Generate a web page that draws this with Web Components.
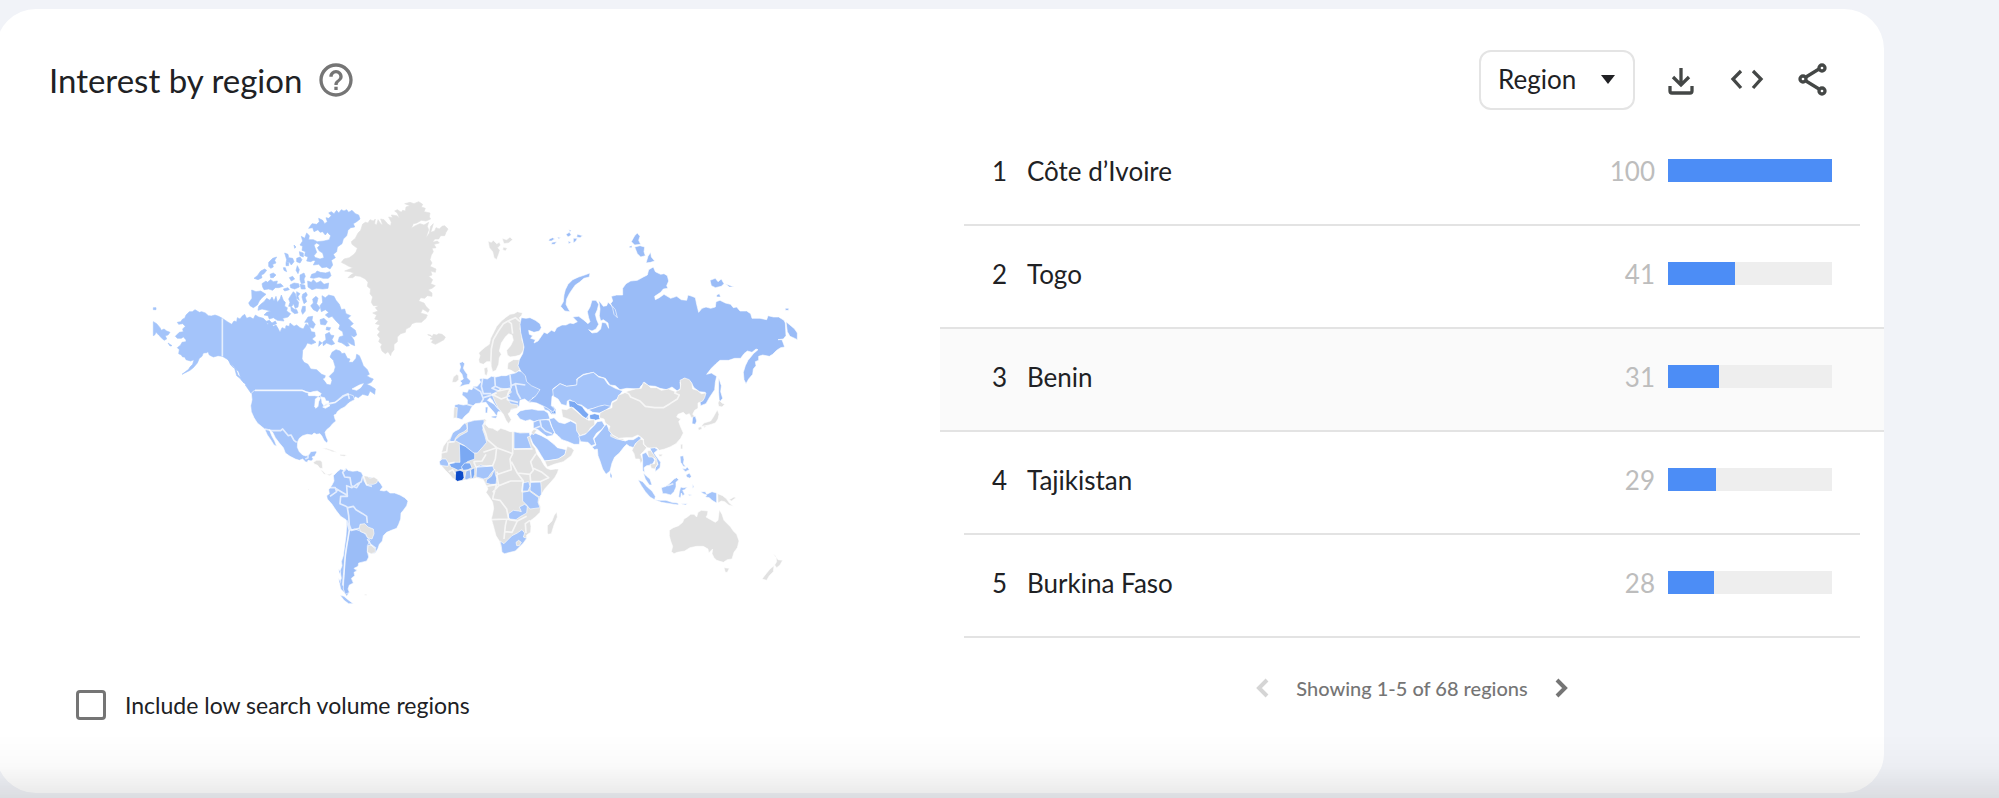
<!DOCTYPE html>
<html lang="en">
<head>
<meta charset="utf-8">
<title>Interest by region</title>
<style>
  html, body { height: 100%; }
  body {
    margin: 0;
    background: #f1f3f8;
    color: #202124;
    font-family: Lato, sans-serif;
    overflow: hidden;
  }
</style>
</head>
<body>
<trends-card>
  <span slot="title">Interest by region</span>
  <help-button slot="title"></help-button>
  <region-select slot="actions"></region-select>
  <icon-button slot="actions" name="download" label="Download CSV"></icon-button>
  <icon-button slot="actions" name="embed" label="Embed"></icon-button>
  <icon-button slot="actions" name="share" label="Share"></icon-button>
  <geo-map slot="chart"></geo-map>
  <check-option slot="chart">Include low search volume regions</check-option>
  <rank-table slot="list"></rank-table>
  <list-pager slot="list">Showing 1-5 of 68 regions</list-pager>
</trends-card>
<page-fade></page-fade>

<script>
class TrendsCard extends HTMLElement {
  constructor() {
    super();
    this.attachShadow({ mode: 'open' });
  }

  connectedCallback() {
    this.shadowRoot.innerHTML = `
      <style>
        :host {
          display: block;
          padding: 9px 115px 3px 0;
        }
        section {
          margin-left: -4px;
          background: #fff;
          border-radius: 40px;
          padding-bottom: 70px;
        }
        header {
          display: flex;
          align-items: center;
          justify-content: space-between;
          padding: 41px 47px 13px 53px;
        }
        h2 {
          display: flex;
          align-items: center;
          gap: 14px;
          margin: 0;
          font-size: 33px;
          font-weight: 400;
          line-height: 40px;
        }
        .actions {
          display: flex;
          align-items: center;
          gap: 18px;
        }
        .body {
          display: grid;
          grid-template-columns: 1fr 1fr;
        }
      </style>
      <section>
        <header>
          <h2><slot name="title"></slot></h2>
          <div class="actions"><slot name="actions"></slot></div>
        </header>
        <div class="body">
          <div><slot name="chart"></slot></div>
          <div><slot name="list"></slot></div>
        </div>
      </section>
    `;
  }
}

class HelpButton extends HTMLElement {
  constructor() {
    super();
    this.attachShadow({ mode: 'open' });
  }

  connectedCallback() {
    this.shadowRoot.innerHTML = `
      <style>
        :host { display: block; height: 40px; }
        button {
          display: block;
          padding: 0;
          border: 0;
          background: none;
          cursor: pointer;
        }
        svg { display: block; fill: #757575; }
      </style>
      <button aria-label="Help">
        <svg width="40" height="40" viewBox="0 0 24 24"><path d="M11 18h2v-2h-2v2zm1-16C6.48 2 2 6.48 2 12s4.480 10 10 10 10-4.480 10-10S17.520 2 12 2zm0 18c-4.410 0-8-3.590-8-8s3.590-8 8-8 8 3.590 8 8-3.590 8-8 8zm0-14c-2.210 0-4 1.790-4 4h2c0-1.100.9-2 2-2s2 .9 2 2c0 2-3 1.750-3 5h2c0-2.250 3-2.500 3-5 0-2.210-1.790-4-4-4z"/></svg>
      </button>
    `;
  }
}

class RegionSelect extends HTMLElement {
  constructor() {
    super();
    this.attachShadow({ mode: 'open' });
  }

  connectedCallback() {
    this.shadowRoot.innerHTML = `
      <style>
        :host { display: block; margin-right: 4px; }
        .field { display: grid; align-items: center; }
        select, svg { grid-area: 1 / 1; }
        select {
          appearance: none;
          box-sizing: border-box;
          height: 60px;
          padding: 0 56px 2px 17px;
          border: 2px solid #e4e4e4;
          border-radius: 12px;
          background: #fff;
          color: #202124;
          font: 26px Lato, sans-serif;
          cursor: pointer;
        }
        svg {
          justify-self: end;
          margin-right: 20px;
          pointer-events: none;
        }
      </style>
      <div class="field">
        <select aria-label="Resolution">
          <option>Region</option>
          <option>City</option>
        </select>
        <svg width="14" height="10" viewBox="0 0 14 10"><path d="M0 0h14L7 9z" fill="#202124"/></svg>
      </div>
    `;
  }
}

const ICONS = {
  download: '<path d="M24 12v17M16 21l8 8 8-8M13 30v5q0 2 2 2h18q2 0 2-2v-5"/>',
  embed: '<path d="M18 15l-8 8 8 9M30 15l8 8-8 9"/>',
  share: '<path d="M17 21l13-8M17 25l13 8"/><circle cx="14" cy="23" r="3"/><circle cx="33" cy="12" r="3"/><circle cx="33" cy="35" r="3"/>'
};

class IconButton extends HTMLElement {
  constructor() {
    super();
    this.attachShadow({ mode: 'open' });
  }

  connectedCallback() {
    this.shadowRoot.innerHTML = `
      <style>
        :host { display: block; }
        button {
          display: block;
          padding: 0;
          border: 0;
          border-radius: 50%;
          background: none;
          cursor: pointer;
        }
        svg {
          display: block;
          fill: none;
          stroke: #444746;
          stroke-width: 3.300;
        }
      </style>
      <button aria-label="${this.getAttribute('label')}">
        <svg width="48" height="48" viewBox="0 0 48 48">${ICONS[this.getAttribute('name')]}</svg>
      </button>
    `;
  }
}

// Each group shares an origin; shapes are [fill class, path data].
const MAP = [
  // northern part of North America
  { x: 0, y: 0, coast: true, shapes: [
    ['a', 'M247 388L236 382 225 378 214 381 205 380 196 372 185 368 178 370 165 362 157 368 148 368 138 378 134 388 128 390 122 398 112 400 116 406 128 404 136 412 128 420 130 428 118 430 106 442 112 448 124 448 130 444 138 452 138 458 126 460 122 468 112 476 118 482 116 494 124 498 128 504 134 504 138 512 152 516 162 512 158 526 150 534 146 541 126 556 142 548 150 544 160 536 172 522 178 508 186 502 190 492 200 491 204 488 208 498 220 504 234 500 247 502Z'],
    ['a', 'M40 398L50 404 60 416 64 424 72 420 80 426 90 430 84 438 76 440 80 450 72 454 64 446 56 438 48 430 44 438 40 440Z'],
    ['a', 'M40 356h8v6h-8zM84 462l12 8-6 1z'],
    ['a', 'M247 388L262 398 275 406 282 396 290 398 292 386 300 390 306 382 314 376 320 388 330 384 340 390 346 378 356 384 370 388 378 396 382 406 392 404 400 412 408 408 414 418 420 430 426 416 436 420 438 410 448 412 450 402 462 412 470 408 480 416 490 420 498 404 508 412 514 428 524 430 526 442 516 450 528 460 514 466 502 462 496 474 488 484 486 510 492 520 504 526 512 540 530 542 545 556 556 560 552 572 560 586 572 588 576 574 568 562 582 548 586 534 580 514 570 504 576 490 588 482 600 486 606 494 614 492 622 508 630 510 626 520 638 520 648 508 650 496 658 500 664 514 670 530 682 542 688 556 680 560 690 566 700 570 694 580 680 586 690 590 706 600 704 616 690 606 684 620 668 616 655 626 646 622 640 630 630 628 614 650 590 662 570 670 560 668 580 650 560 645 540 618 525 616 510 612 490 604 345 604 345 618 333 606 320 590 304 572 296 548 280 532 264 512 247 502Z'],
    ['line', 'M247 388V502'],
    ['a', 'M262 506l10 10 6 18 10 6 6 18 14 12 4 12-12-14-10-8-6-22-12-10zM316 588l10 4 16 22-8 0z'],
    ['a', 'M335 303L348 308 362 306 378 316 366 326 358 336 352 348 340 356 330 350 326 342 336 328Z'],
    ['a', 'M364 344L372 338 380 328 390 334 396 324 402 336 408 322 412 340 420 330 424 318 430 334 436 340 434 352 442 356 440 366 452 374 444 384 428 388 432 396 412 394 400 386 388 390 384 380 372 378 380 370 392 366 366 360 354 364 356 352Z'],
    ['a', 'M376 398l12-4 8 8 10-6 4 8-16 6zM452 320l8-12 6 6 4 18 6 8-2 14-8 4-6-14-4 8-10 0 4-12-4-10zM470 308l10 6-6 8 4 12-8-6zM452 352l10 8 8 2 4 10-10 2-10-8zM488 316l10-6 4 8-6 8 4 12-8 6-4-12-2-8zM488 352l8 0 0 14-8 10-4-10zM430 300l14-4 4 6-14 4z'],
    ['a', 'M518 330L528 322 534 328 530 344 540 356 532 368 520 362 512 350 520 342ZM546 320L556 326 566 318 582 322 588 334 598 346 604 362 614 360 618 374 632 380 624 388 640 404 630 412 646 424 650 438 642 444 632 438 642 454 644 470 634 466 622 458 628 470 620 472 606 462 594 458 598 444 610 440 608 428 596 420 600 408 588 396 576 382 566 386 556 378 566 370 556 362 544 368 540 350 548 340Z'],
    ['a', 'M504 384l14-2-2 12 10 12-6 12-12-4-4-14-10 0zM540 392l12-4 10 10-6 10-14-2zM556 436l12-6 4 8 10 2-6 12 8 12-10 4-14-6-10 8-2-10 10-8zM560 414l12 2-4 8-10-2zM538 456l8 6-10 10z'],
    ['a', 'M503 276L514 280 520 272 530 282 542 276 552 286 566 282 564 298 548 300 530 298 516 302 504 294Z'],
    ['a', 'M515 256l12-4 4-6 10 4 16 2 12-4 4 12-8 8-16 0-12-4-16 4-10-2zM480 258l12-6 4 10-4 8 2 12-10 2-4-12zM450 288l12-6 14 2 2 10-14 6-12-4zM480 286l14 2 2 12-12 0zM448 266l10-4 6 8-10 6z'],
    ['a', 'M342 268l10-8 10-14 12-6 6 4-8 10-8 4 2 8-12 6zM366 284l12-8 4 4 10-8 8 6 12-2-2 10 12-2 8 8-14 4-10 0-8 8-12-4-14 2-4-8zM390 256l10-4 8 6-8 8-8 0zM386 220l12-12 12-4-6 10 4 8-10 4 2 8-8 4-6-6zM434 192l10 4 2 10 12 2 4 10-8 10-6-8-10 2 2-10zM430 236l6 0 4 12-8-4zM470 208l10-4 6 8-6 10-10-4zM472 230l6 12-4 12-6-10zM462 168l6 6-4 4zM478 188l12 4 0 12-10-4zM438 222l8 0 0 8-8 0z'],
    ['a', 'M574 68L582 74 590 64 596 72 604 62 612 66 620 62 626 70 636 64 646 74 656 78 660 90 650 98 640 104 644 114 632 116 624 124 620 140 610 150 606 164 592 174 590 188 580 196 586 206 574 214 578 228 570 240 560 234 546 236 536 226 520 228 526 216 514 210 528 206 540 210 552 206 548 192 538 186 532 176 540 168 530 162 522 168 530 190 522 200 528 210 512 218 500 216 504 204 494 200 496 188 486 184 488 172 480 168 488 156 484 142 494 148 500 132 508 140 506 152 520 152 532 158 552 156 568 152 572 140 562 130 556 138 548 128 540 130 534 122 522 128 518 116 506 118 516 104 530 106 538 98 536 88 548 94 554 104 562 98 558 86 566 88 574 80 566 72Z']
  ]},
  // Greenland, Iceland
  { x: 600, y: 0, coast: true, shapes: [
    ['n', 'M68 105L76 100 84 102 90 92 100 96 106 90 104 104 110 108 114 92 122 104 128 108 122 90 132 92 144 106 152 110 154 100 146 84 158 86 154 78 170 80 178 86 172 72 164 66 172 62 184 70 188 64 196 66 198 54 210 50 194 44 210 40 222 44 236 38 248 46 244 54 256 58 252 68 270 72 268 84 272 90 258 96 244 94 230 102 220 104 214 118 226 110 240 104 252 108 266 100 262 112 266 122 262 134 258 148 268 132 272 112 280 104 276 118 272 130 284 126 288 116 298 120 306 112 314 110 324 120 318 130 314 140 302 140 296 150 284 150 278 160 292 156 298 162 282 166 288 176 276 178 280 188 274 198 270 212 276 222 270 232 288 240 286 250 272 246 276 258 266 262 278 272 272 284 286 290 276 298 264 302 276 312 276 322 262 320 254 328 242 326 236 336 252 342 258 352 268 362 264 370 248 360 242 372 262 378 258 388 244 400 228 400 216 404 210 414 198 420 196 430 182 434 172 444 172 458 162 466 162 482 154 492 152 500 144 488 136 494 126 486 122 474 126 466 116 458 120 448 112 438 120 428 112 420 120 408 106 404 116 394 104 390 110 378 98 372 114 366 106 356 116 350 100 350 94 340 98 324 90 314 92 300 82 292 84 280 76 270 60 262 46 260 38 266 24 266 32 258 42 252 30 248 14 246 30 240 38 236 26 232 16 226 4 220 12 210 28 206 42 196 48 188 52 178 36 166 34 158 46 148 54 132 62 124Z'],
    ['n', 'M263 437L272 438 276 444 280 436 290 438 296 434 306 436 316 444 312 452 298 460 286 466 274 460 280 452 270 450 278 444Z']
  ]},
  // US, Mexico, South America
  { x: 240, y: 570, shapes: [
    ['a', 'M105 34H246L256 38 272 42 285 42 298 44 306 60 316 74 330 72 345 70 358 62 372 52 388 46 400 50 404 62 392 68 386 72 374 84 362 90 352 98 348 106 342 108 345 120 348 126 338 134 330 144 320 152 315 160 318 172 324 186 320 192 312 184 306 172 300 164 290 166 282 162 276 168 262 166 248 170 238 178 233 188 232 205 238 218 248 228 258 231 268 226 272 218 288 216 290 220 284 232 276 234 280 240 274 246 264 244 262 250 256 248 248 240 238 244 226 240 210 232 196 222 190 206 178 192 166 176 158 160 148 152 156 172 164 186 170 202 162 198 152 182 142 168 134 150 124 142 112 132 102 116 94 98 92 80 96 62 94 44 98 38Z'],
    ['line', 'M105 34H246L258 39 272 42 300 44M310 78L330 74 346 70 356 62 370 50 384 44 388 60M134 150L155 155 182 155 188 150 205 170 213 168 222 184 230 190M256 240L264 236 264 226'],
    ['o', 'M264 44l14-6 14-2 12 8-8 8-12-2-8 0-10 0zM286 60l8-6 8 2-6 12-2 14-6 6-4-4zM304 54l10 2 4 10 8 0 0 6-10 2-4 6-6-8zM308 84l18-8 4 4-14 8z'],
    ['o', 'M310 0l8-2 14 0 0 12-4 4-10-6zM396 30l22-12 12-4-8 12-12 8z'],
    ['n', 'M280 250l10-6 10 0 6 4 2 20-8 0-8-10-8-2zM300 270l8 6 10 10-6 0zM318 284l10 2 10-4-2 4-8 4zM306 208l14 0 18 6 12 6-12-2-16-6zM360 226l20 2-6 4-14-2zM264 330h3v3h-3zM434 646h6v3h-6z'],
    ['a', 'M340 290L352 278 362 270 372 274 378 267 384 274 398 277 412 275 424 280 430 292 444 294 458 296 472 302 482 314 488 324 480 334 492 336 500 334 510 342 524 342 540 348 554 356 564 366 560 380 550 394 543 402 542 420 536 436 530 448 514 454 500 460 490 470 487 486 478 496 474 508 466 522 455 524 444 520 446 534 440 546 428 550 416 552 414 562 402 568 412 574 402 580 404 590 394 598 400 612 388 618 384 630 388 640 380 652 372 640 362 630 358 610 364 598 360 576 366 560 364 548 370 530 374 500 378 470 380 440 378 422 362 412 348 394 336 376 322 360 320 350 328 344 326 332 336 318 342 306Z'],
    ['a2', 'M388 454L404 450 420 456 432 462 444 476 450 484 442 500 442 518 446 534 440 546 416 552 414 562 402 568 410 576 402 580 404 590 394 598 400 612 388 618 384 630 388 640 376 646 370 630 372 590 374 550 378 510 384 480Z'],
    ['a', 'M360 648l12 4 12 10 16 12-14 0-14-10zM356 570l6 8-4 8zM356 598l6 10-4 8z'],
    ['n', 'M430 290l12 2 8 6 12-4 12 8-4 10-10 4-12 0-8 2-8-12zM420 436l14-2 10 10 16 6 2 14-6 16-14-4-4-12-16-6-4-10zM444 500l10-2 12 12 0 10-12 4-12-4z'],
    ['line', 'M378 270L368 280 374 294 390 296 394 320M428 292L424 308 410 316 396 326 380 320 382 352 362 352 360 374 378 382 384 386 400 382 408 392 428 404 440 412 442 432M330 326L346 326 350 338 330 352M346 328L370 342 384 350M382 386L386 410 388 438 394 454 418 448M380 424L388 454 382 490 376 530 372 580 368 620M442 480L452 496 468 508M394 320L410 326 420 310M430 290L440 318 456 322']
  ]},
  // Africa
  { x: 870, y: 660, shapes: [
    ['n', 'M60 88L68 72 76 66 88 60 96 50 106 42 118 38 134 34 150 32 164 30 170 34 166 46 176 56 188 58 202 66 212 58 226 62 240 68 256 68 270 70 284 70 298 71 304 84 303 94 308 108 316 118 320 134 332 150 342 168 350 178 362 182 376 180 386 180 382 192 374 206 360 222 344 240 334 256 330 266 326 280 332 294 330 310 316 324 300 336 303 352 302 370 290 378 290 390 280 402 268 414 256 426 240 430 224 434 216 430 212 412 208 396 198 380 190 350 184 330 188 314 191 298 188 280 178 264 168 250 174 240 168 228 160 212 140 206 124 210 112 212 95 214 80 214 68 208 58 196 46 184 36 172 28 160 34 148 34 132 40 112 50 98Z'],
    ['a', 'M60 92L68 72 76 66 88 60 96 50 104 42 110 48 112 60 102 68 86 76 76 88 74 98 60 98ZM74 94L90 80 112 68 112 40 134 34 162 32 162 50 158 62 164 78 170 100 160 112 142 132 128 132 104 110Z'],
    ['d', 'M88 104L106 112 134 134 134 150 112 158 104 168 96 180 84 184 72 178 62 174 58 164 74 160 90 160Z'],
    ['a', 'M28 158L36 150 48 150 56 164 54 172 38 170 30 168ZM140 174L152 168 170 172 188 170 192 182 182 194 174 206 160 210 148 206 138 204Z'],
    ['a2', 'M194 180L196 196 200 208 198 226 182 226 168 222 170 212 184 202ZM108 186L120 182 124 206 110 212 104 210Z'],
    ['d', 'M94 174L104 162 120 162 126 176 114 182 100 184ZM122 182L134 176 134 196 130 208 124 208Z'],
    ['c', 'M77 187L90 184 100 188 102 206 97 214 82 217 76 212Z'],
    ['a', 'M252 68L270 72 298 71 300 82 292 84 304 118 252 120ZM278 222L296 218 300 232 294 246 276 246ZM302 220L332 218 334 240 334 256 328 264 300 244ZM278 250L298 246 326 266 324 280 330 296 300 300 290 288 278 276ZM236 314L250 304 266 306 274 308 268 294 284 286 292 292 290 312 272 322 258 332 240 330 236 326Z'],
    ['a', 'M210 396L222 404 230 396 246 380 262 372 276 362 284 372 280 384 290 388 280 402 268 414 256 426 240 430 224 434 216 430 214 412Z'],
    ['n', 'M258 400l8-6 8 6-6 10-8 0zM352 372L352 350 366 336 372 320 380 308 382 324 372 348 364 374 354 376Z'],
    ['line', 'M170 34L158 50 168 76 172 92 200 116 248 134 M160 130L200 116M130 158L156 156 168 136M132 160L138 174 188 170 196 150 200 116M248 68V134L240 150 244 182 204 196 200 188M252 120H308M244 158L262 192 300 196 310 184 302 158 318 134M262 192L280 216 276 250M200 196L206 230 242 216 280 216M300 196L302 218 330 218 356 206 336 190 310 178M32 132L50 128 54 100 74 98M54 164L74 160M56 188L68 182 76 196M170 232L200 226 190 260 188 272M188 270L210 274 230 300 236 330 184 332M230 332L226 350 222 390M236 332L262 336 246 370 226 368M262 336L290 322M288 372L286 344 300 334M188 250L206 230']
  ]},
  // Europe and the Middle East
  { x: 870, y: 330, shapes: [
    ['n', 'M148 192L146 182 150 170 146 162 156 152 166 144 178 136 182 118 192 98 200 82 214 66 226 56 240 46 252 44 262 38 278 42 274 50 268 56 274 70 270 90 276 108 276 124 282 136 280 156 270 168 256 172 240 174 232 168 230 154 242 140 250 124 246 108 236 104 226 114 214 132 210 148 208 156 214 166 208 176 206 196 198 214 188 218 184 204 180 188 170 188 160 196Z'],
    ['n', 'M174 -174L184 -170 190 -176 200 -166 208 -170 212 -162 204 -154 210 -146 206 -134 200 -118 192 -124 188 -142 178 -154ZM216 -182L230 -178 240 -186 248 -178 236 -168 222 -166ZM220 -156L232 -152 226 -144 218 -148Z'],
    ['line', 'M182 200L184 150 190 122 205 96 220 74 234 66 244 74 248 104M234 66L256 56 270 68'],
    ['n', 'M70 234L80 226 86 230 86 242 78 250 66 250ZM162 208L172 204 174 216 170 230 164 226ZM234 192L250 182 270 182 266 196 270 212 256 222 244 214 232 210Z'],
    ['a', 'M88 192L98 188 104 194 100 208 106 218 112 226 112 236 122 246 118 256 104 258 88 264 96 252 90 246 100 240 96 226 88 216 92 204Z'],
    ['a', 'M74 318L86 315 100 318 112 316 112 302 104 294 96 288 98 278 112 280 116 270 126 272 130 262 142 262 152 250 148 240 160 238 172 240 184 232 198 234 214 230 228 230 240 226 256 222 266 216 288 220 296 250 320 264 332 274 324 290 306 298 314 304 300 312 284 300 270 304 268 320 262 326 240 334 230 352 200 326 186 302 180 296 172 304 190 314 208 330 214 338 204 338 200 352 192 340 176 322 168 310 152 312 136 314 124 326 118 340 104 352 96 362 84 358 72 356Z'],
    ['n', 'M72 324L82 326 80 356 70 358ZM186 286L200 278 214 268 240 270 244 280 230 290 234 302 242 314 264 318 262 328 244 330 240 340 234 344 244 362 236 374 228 364 220 346 204 326 194 306Z'],
    ['a', 'M166 324l8 0-2 18-6 0zM184 352l18-2-4 8-12-2z'],
    ['line', 'M112 316L138 324M130 264L152 278 160 300 152 314M158 238L154 262 160 284 184 284M194 234L196 262 186 268 206 276 240 268M196 262L214 270M240 228L244 264 234 284 232 302 264 310M160 296L180 290 200 282M186 286L214 300 240 290M240 262L256 254 286 258M256 256L262 282 272 300'],
    ['a', 'M260 346L270 336 286 332 306 330 324 334 342 334 354 342 360 360 342 362 324 364 312 368 300 362 286 366 270 360ZM336 312L352 320 370 322 378 332 378 346 364 346 356 336 344 332Z'],
    ['d', 'M362 334l14 0 2 10-12 0z'],
    ['a', 'M310 370L324 364 348 362 358 364 364 382 374 400 366 410 350 412 336 402 324 392 310 388ZM358 360L372 356 386 370 404 374 422 366 440 376 444 396 450 420 448 436 432 436 414 428 396 422 384 410 374 402 366 384ZM300 412L308 400 320 404 334 410 352 420 372 436 382 446 408 452 406 466 386 480 360 484 344 486 334 470 322 450 308 432Z'],
    ['n', 'M344 486L362 484 384 480 404 468 412 442 424 446 432 454 424 470 400 488 372 496 352 504ZM304 400l8-10 8 4-10 14z'],
    ['line', 'M330 364L334 384 346 396 366 404M310 390L330 382']
  ]},
  // Russia and Kazakhstan
  { x: 1200, y: 90, shapes: [
    ['r', 'M-56 296L-42 298 -30 296 -14 304 0 314 4 326 -2 336 -18 340 -34 334 -32 346 -22 350 -28 358 -14 362 -18 372 -6 366 4 352 12 340 22 344 34 334 44 338 50 326 66 318 78 318 90 312 100 314 112 308 98 294 116 292 130 302 144 314 150 308 146 296 142 278 150 264 156 244 168 244 176 256 172 272 166 286 170 302 176 316 168 330 156 336 146 332 156 342 172 340 182 330 186 310 198 312 206 328 204 312 190 302 182 306 178 290 180 270 176 244 184 254 190 262 200 260 204 250 216 260 226 272 232 296 222 286 218 268 212 254 218 246 214 232 230 228 248 228 248 208 258 194 272 186 292 184 310 174 322 168 326 152 340 144 346 158 362 166 372 164 382 170 386 186 380 200 384 208 370 210 362 220 344 232 346 242 358 236 372 226 392 238 410 232 424 242 440 244 444 228 456 232 466 236 470 256 476 280 486 268 498 264 512 268 526 264 528 248 540 244 556 252 572 256 580 266 590 264 600 276 620 276 632 284 636 298 660 298 680 302 684 290 700 294 716 294 732 304 736 312 738 350 730 360 714 362 726 362 734 384 722 386 710 394 698 406 688 412 668 408 656 412 656 424 646 428 648 440 640 450 638 466 626 480 618 494 612 482 610 460 616 440 624 424 634 412 640 404 654 392 648 390 636 400 622 396 612 404 602 418 584 418 566 424 540 424 528 434 514 448 500 466 514 462 530 472 526 490 524 512 508 536 498 554 482 560 480 548 496 520 478 518 462 506 452 488 432 478 420 490 422 508 412 516 396 504 380 512 360 508 346 502 324 500 314 490 302 502 298 510 260 508 240 512 226 500 210 498 196 478 176 472 160 460 130 466 110 480 112 498 80 502 60 494 38 510 46 526 36 532 34 560 44 570 40 580 20 566 -10 552 -34 548 -12 530 0 512 -26 500 -40 488 -44 470 -58 456 -66 440 -62 422 -52 404 -48 384 -52 366 -58 340 -60 316Z'],
    ['r', 'M738 308L750 318 764 330 772 342 772 362 760 356 750 352 742 338ZM736 268h10v6h-10zM150 162L148 174 132 178 118 190 106 198 96 212 88 224 80 240 78 256 84 268 90 278 74 276 62 262 70 248 72 228 76 212 84 196 98 182 116 174 134 168ZM284 50L292 42 300 52 296 64 302 76 284 78 274 68ZM284 84L300 80 314 84 312 98 316 110 302 114 292 104ZM318 132L324 112 332 100 334 114 344 126 332 130ZM510 184L526 178 534 188 544 180 552 194 544 202 526 206 514 200ZM556 194L572 200 582 204 568 204ZM530 228l8-4 4 10-12 0zM268 82l8-2 0 6-8 0zM28 60l10-4 6 4-10 6-8 0zM36 70l14-2-6 8-10 0zM78 46l10-6 6 8-10 6zM86 32l8 2-4 4zM100 58l12 0-4 8-8 6zM112 46l16 4-8 6-10-2zM84 66l10 4-8 4zM52 54l10 2-6 4zM536 476L544 500 542 518 548 538 538 550 536 520Z'],
    ['a', 'M38 512L60 494 80 502 110 498 112 480 130 468 160 460 176 474 192 478 204 496 226 508 248 516 240 526 232 540 216 548 210 568 186 560 160 568 144 572 124 558 110 556 90 542 82 546 80 560 64 556 54 540 40 532Z']
  ]},
  // Asia and Oceania
  { x: 1260, y: 510, shapes: [
    ['d', 'M26 124L44 128 52 136 66 142 76 156 86 166 84 182 70 174 56 160 40 146 28 144ZM88 168L104 164 118 168 120 180 106 184 90 180Z'],
    ['a2', 'M100 148L116 142 134 138 152 142 138 154 118 162 98 160 86 152Z'],
    ['n', 'M4 150L20 152 34 144 48 156 66 172 86 184 104 182 104 198 92 206 82 222 60 230 50 216 48 192 30 182 8 174Z'],
    ['a', 'M56 232L76 226 92 210 104 198 112 188 126 186 134 200 124 212 110 222 100 238 106 256 94 260 84 250 62 248ZM134 200L140 196 148 214 160 230 182 242 196 246 206 242 220 242 236 232 244 236 238 248 226 254 222 266 208 262 200 256 192 264 178 282 164 294 156 312 150 336 138 346 128 330 120 306 114 290 112 270 104 272 96 264 108 258 102 240 116 224 126 212ZM150 340l6 8 0 10-6-4z'],
    ['n', 'M152 226L176 238 192 240 190 244 170 240 152 232Z'],
    ['n', 'M120 162L138 152 156 146 156 132 170 124 176 108 188 104 204 96 226 90 244 88 250 70 264 78 272 86 290 86 304 94 326 90 346 98 360 92 362 76 360 64 374 57 388 62 396 74 398 90 412 94 424 104 438 102 434 116 428 126 414 132 414 148 404 154 398 166 408 176 394 176 388 164 378 168 370 160 354 166 350 174 362 180 356 188 362 204 370 222 362 238 348 254 330 264 314 270 298 274 290 266 276 268 262 266 252 256 250 240 234 228 216 236 198 236 176 238 158 228 146 214 150 202 136 192 132 180 118 176Z'],
    ['n', 'M222 262L230 250 242 240 250 244 250 256 260 266 250 278 242 286 248 304 242 314 238 300 226 300 222 284 216 274Z'],
    ['a', 'M246 286L258 280 264 290 278 290 284 304 276 318 260 320 252 326 254 342 248 334 248 306ZM270 268L284 266 294 272 282 282 292 296 302 310 300 326 286 338 286 326 294 316 286 298 276 282Z'],
    ['n', 'M262 276l10-2 8 12 10 14 2 16-8 14-10-2-4-12 14-2 2-14-10-6-10 0zM296 286l12 0-4 6-6 0zM362 256l6 0 0 14-6 0z'],
    ['a', 'M250 342L260 352 270 360 276 378 268 378 256 360ZM234 362L248 368 262 384 276 396 286 412 284 422 270 414 256 398 244 380ZM284 422L300 424 318 424 336 430 354 432 356 438 330 434 304 430ZM304 386L318 382 330 372 342 360 350 356 356 362 348 370 348 384 342 398 332 408 318 404 308 404ZM358 398l4-14 8 2 12-2-8 8-6 2 6 12-6 4-4-8-2 14-6-2zM360 292l10-2 2 12-2 12 8 10-8-2-8-12zM366 328l10 2 6-6 6 8-12 6zM378 348l10-6 6 10-4 6-10-4zM422 398l14 0 4 8 16-8 14 4 0 30-14-8-8-8-12-2 4-6-10-4zM398 376l4 8-4 4zM362 434l20 0 8-4-14 8zM384 406l12 2-8 2z'],
    ['n', 'M473 404L488 410 500 420 508 432 520 442 506 438 494 428 484 426 474 432ZM508 422l14-8 6 2-14 10z'],
    ['line', 'M188 96L206 104 212 114 240 126 256 142 284 146 310 146 330 134 352 120 358 108 344 102 348 98M322 380L340 374M78 180L88 168'],
    ['a2', 'M398 174L406 172 410 186 406 196 396 194Z'],
    ['n', 'M478 124L486 132 494 136 486 144 476 142 474 132ZM472 152L477 166 474 180 466 192 450 197 438 200 422 204 432 192 452 186 460 174ZM414 206l10-4 2 8-10 4zM428 202l12-2-6 6z'],
    ['n', 'M328 514L340 506 356 500 368 490 372 480 382 474 392 466 402 466 410 474 414 460 424 454 444 456 442 468 438 474 452 482 466 490 474 484 478 452 486 466 492 484 500 492 512 504 520 516 530 526 537 546 532 566 522 580 516 600 502 602 490 610 470 604 462 596 456 584 458 570 446 582 444 570 430 562 410 562 390 566 374 576 352 580 342 584 334 578 338 562 332 546 328 530ZM492 626L508 628 502 640 496 640ZM648 594L654 602 668 604 660 618 650 626 644 618 650 608ZM642 620L640 638 628 650 620 664 606 660 620 642 630 630ZM640 584l8 8-2 2z']
  ]}
];

class GeoMap extends HTMLElement {
  constructor() {
    super();
    this.attachShadow({ mode: 'open' });
  }

  connectedCallback() {
    const groups = MAP.map(g => `<g class="${g.coast ? 'coast' : ''}" transform="translate(${g.x} ${g.y})">` +
      g.shapes.map(([cls, d]) => `<path class="${cls}" d="${d}"/>`).join('') + '</g>').join('');
    this.shadowRoot.innerHTML = `
      <style>
        :host {
          display: block;
          padding: 66px 140px 78px 144px;
        }
        svg { display: block; width: 100%; }
        path {
          stroke: #fff;
          stroke-opacity: .6;
          stroke-width: 3;
          stroke-linejoin: round;
        }
        .a { fill: #a4c4fa; }
        .a2 { fill: #9bbdf7; }
        .r { fill: #9abcf7; }
        .d { fill: #7ba9f3; }
        .c { fill: #0d4bc9; }
        .n { fill: #e1e1e1; }
        .o { fill: #fff; }
        .coast .a { stroke: #a4c4fa; }
        .coast .n { stroke: #e1e1e1; }
        .line {
          fill: none;
          stroke-opacity: .7;
          stroke-width: 5;
        }
      </style>
      <svg viewBox="0 0 1980 1260" role="img" aria-label="Interest by region map">${groups}</svg>
    `;
  }
}

class CheckOption extends HTMLElement {
  constructor() {
    super();
    this.attachShadow({ mode: 'open' });
  }

  connectedCallback() {
    this.shadowRoot.innerHTML = `
      <style>
        :host { display: block; padding-left: 80px; }
        label {
          display: inline-flex;
          align-items: center;
          gap: 19px;
          font-size: 23px;
          line-height: 36px;
          cursor: pointer;
        }
        input {
          appearance: none;
          box-sizing: border-box;
          width: 30px;
          height: 30px;
          margin: 0;
          border: 3px solid #757575;
          border-radius: 4px;
          background: #fff;
        }
        input:checked { background: #4c8df6; }
      </style>
      <label for="box"><input id="box" type="checkbox"><slot></slot></label>
    `;
  }
}

const REGIONS = [
  ['Côte d’Ivoire', 100],
  ['Togo', 41],
  ['Benin', 31],
  ['Tajikistan', 29],
  ['Burkina Faso', 28]
];

class RankTable extends HTMLElement {
  constructor() {
    super();
    this.attachShadow({ mode: 'open' });
  }

  connectedCallback() {
    const rows = REGIONS.map(([name, value], i) => `
      <tr class="${i === 2 ? 'active' : ''}">
        <td class="rank">${i + 1}</td>
        <td>${name}</td>
        <td class="value">${value}</td>
        <td class="bar"><div><span style="width: ${value}%"></span></div></td>
      </tr>`).join('');
    this.shadowRoot.innerHTML = `
      <style>
        :host { display: block; }
        table {
          width: 100%;
          border-collapse: separate;
          border-spacing: 0;
          font-size: 26px;
        }
        td {
          height: 95px;
          padding: 0 0 6px;
          border-bottom: 2px solid #e3e3e3;
        }
        tr::before, tr::after {
          content: '';
          display: table-cell;
          width: 24px;
        }
        .rank { width: 35px; padding-left: 28px; }
        .value { color: #bdbdbd; text-align: right; padding-right: 13px; }
        .bar { width: 164px; padding-right: 28px; }
        .bar div { height: 23px; background: #eee; }
        .bar span { display: block; height: 100%; background: #4c8df6; }
        .active { background: #fafafa; }
        .active::before, .active::after,
        tr:has(+ .active)::before, tr:has(+ .active)::after {
          border-bottom: 2px solid #e3e3e3;
        }
      </style>
      <table aria-label="Regions by interest"><tbody>${rows}</tbody></table>
    `;
  }
}

class ListPager extends HTMLElement {
  constructor() {
    super();
    this.attachShadow({ mode: 'open' });
  }

  connectedCallback() {
    this.shadowRoot.innerHTML = `
      <style>
        :host {
          display: flex;
          justify-content: center;
          align-items: center;
          gap: 16px;
          padding-top: 32px;
          color: #757575;
          font-size: 20px;
          font-weight: 500;
          line-height: 36px;
        }
        button {
          padding: 0;
          border: 0;
          background: none;
          color: inherit;
          cursor: pointer;
        }
        button:disabled { color: #d5d5d5; }
        svg {
          display: block;
          fill: none;
          stroke: currentColor;
          stroke-width: 4;
        }
      </style>
      <button aria-label="Previous" disabled>
        <svg width="36" height="36" viewBox="0 0 36 36"><path d="M23 10l-8 8 8 8"/></svg>
      </button>
      <span><slot></slot></span>
      <button aria-label="Next">
        <svg width="36" height="36" viewBox="0 0 36 36"><path d="M13 10l8 8-8 8"/></svg>
      </button>
    `;
  }
}

// Soft shade along the bottom of the window.
class PageFade extends HTMLElement {
  constructor() {
    super();
    this.attachShadow({ mode: 'open' });
  }

  connectedCallback() {
    this.shadowRoot.innerHTML = `
      <style>
        :host {
          position: fixed;
          left: 0;
          right: 0;
          bottom: 0;
          height: 64px;
          background: linear-gradient(transparent, rgba(0, 0, 0, .02) 50%, rgba(0, 0, 0, .09));
          pointer-events: none;
        }
      </style>
    `;
  }
}

customElements.define('trends-card', TrendsCard);
customElements.define('help-button', HelpButton);
customElements.define('region-select', RegionSelect);
customElements.define('icon-button', IconButton);
customElements.define('geo-map', GeoMap);
customElements.define('check-option', CheckOption);
customElements.define('rank-table', RankTable);
customElements.define('list-pager', ListPager);
customElements.define('page-fade', PageFade);
</script>
</body>
</html>
